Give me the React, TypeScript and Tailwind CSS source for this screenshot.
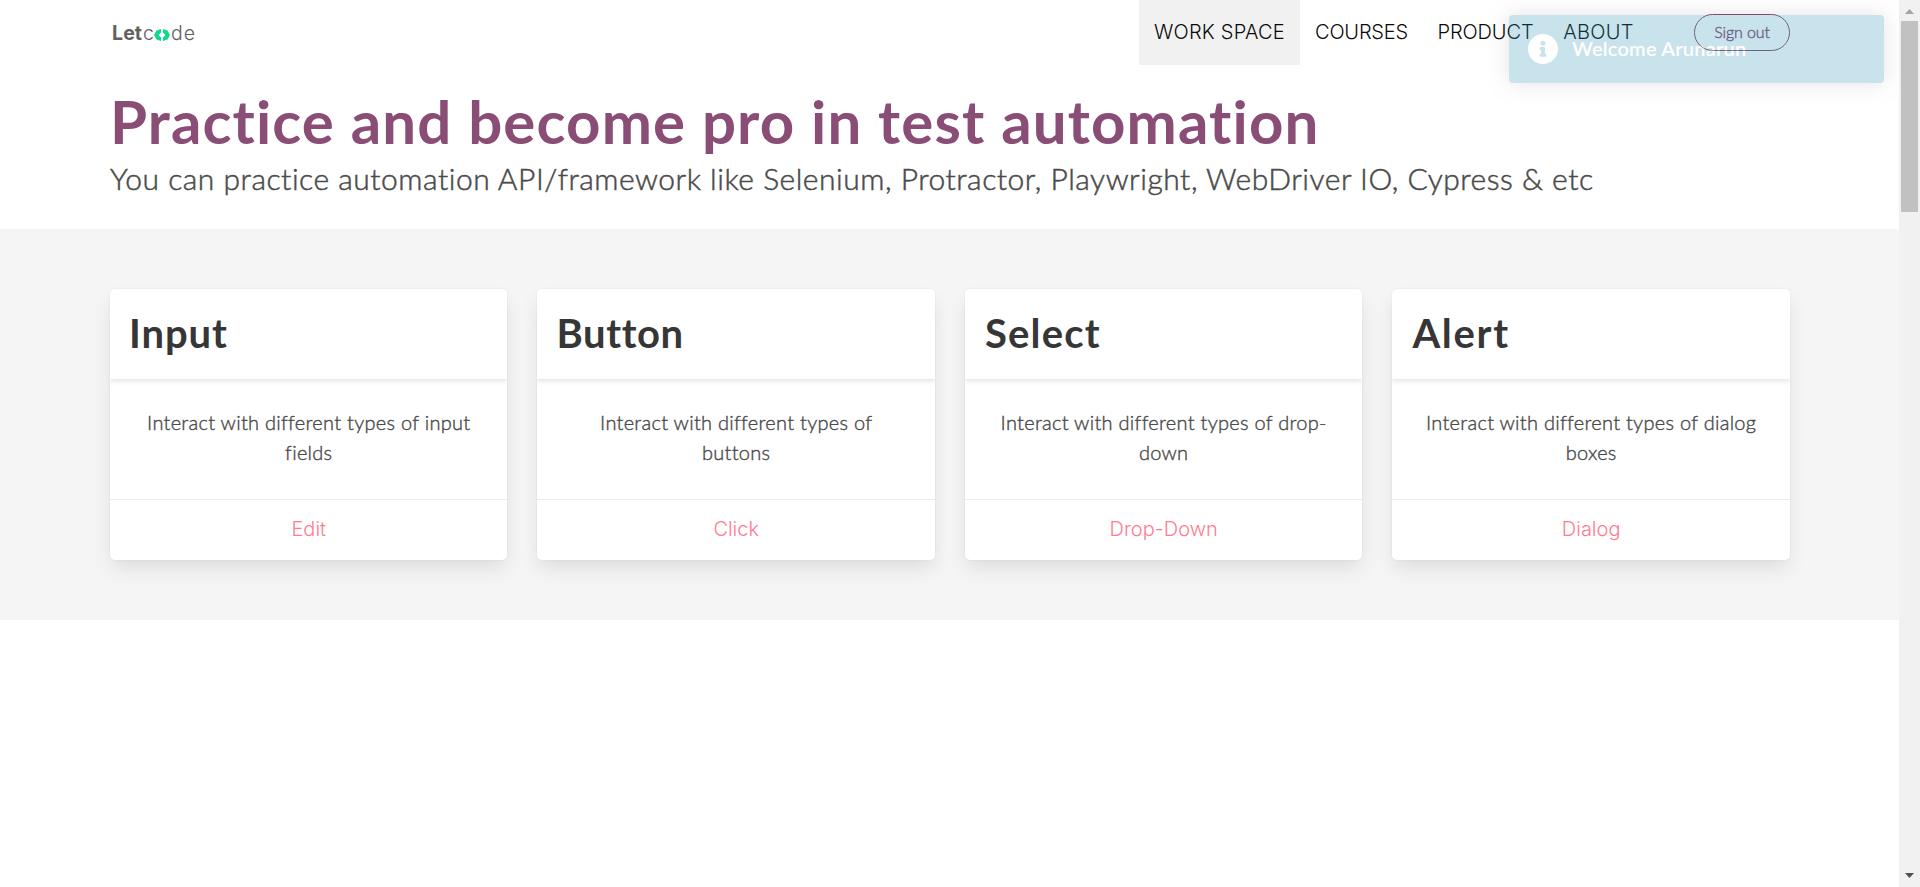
const cards = [
  { title: 'Input', track: 'pl-[19px] tracking-[0.9px]', text: ['Interact with different types of input', 'fields'], link: 'Edit' },
  { title: 'Button', track: 'pl-[19px] tracking-[0.6px]', text: ['Interact with different types of', 'buttons'], link: 'Click' },
  { title: 'Select', track: 'pl-[20px] tracking-[1.2px]', text: ['Interact with different types of drop-', 'down'], link: 'Drop-Down' },
  { title: 'Alert', track: 'pl-[20px] tracking-[1.7px]', text: ['Interact with different types of dialog', 'boxes'], link: 'Dialog' },
];

function Logo() {
  return (
    <div className="flex h-[65px] w-[90px] items-center pt-[2px] font-['Inter',sans-serif] text-[19.5px] leading-none text-[#606060]">
      <span className="w-[32px] pl-[2px] font-bold tracking-[0.1px]">Let</span>
      <span className="w-[12px] pl-px font-light">c</span>
      <svg viewBox="0 0 16 12" className="mt-[2px] h-[12px] w-[16px] shrink-0" fill="#10d98a">
        <path d="M7 0 V3.6 L4.6 6 L7 8.4 V12 L2.5 10.4 L0 6 L2.5 1.6 Z" />
        <path d="M9 0 V3.6 L11.4 6 L9 8.4 V12 L13.5 10.4 L16 6 L13.5 1.6 Z" />
      </svg>
      <span className="pl-[1px] font-light tracking-[1px]">de</span>
    </div>
  );
}

function Navbar() {
  return (
    <header className="flex h-[65px] w-[1680px] justify-between">
      <Logo />
      <nav className="flex font-['Inter',sans-serif] text-[20px] font-light leading-[65px] text-[#0a0a0a]">
        <a className="w-[161px] bg-[#f1f1f1] text-center tracking-[0.2px]">WORK SPACE</a>
        <a className="w-[122px] pl-px text-center tracking-[-0.2px]">COURSES</a>
        <a className="w-[127px] text-center tracking-[-0.1px]">PRODUCT</a>
        <a className="w-[99px] text-center tracking-[0.3px]">ABOUT</a>
        <div className="flex w-[142px] items-center justify-end">
          <button className="h-[37px] w-[96px] rounded-full border border-[#8a4d76] pb-px font-['Lato',sans-serif] text-[16px] font-light leading-[34px] tracking-[-0.1px] text-[#8a4d76] [-webkit-text-stroke:0.4px]">
            Sign out
          </button>
        </div>
      </nav>
    </header>
  );
}

function Toast() {
  return (
    <div className="absolute left-[1509px] top-[15px] flex h-[68px] w-[375px] items-center rounded bg-[#2f96b4] pl-[19px] opacity-[0.26] shadow-[0_0_20px_rgba(0,0,0,0.4)]">
      <svg viewBox="8 8 496 496" className="h-[30px] w-[30px]" fill="#fff">
        <path d="M256 8C119 8 8 119 8 256s111 248 248 248 248-111 248-248S393 8 256 8zm0 110a42 42 0 1 1 0 84 42 42 0 0 1 0-84zm56 254a12 12 0 0 1-12 12h-88a12 12 0 0 1-12-12v-24a12 12 0 0 1 12-12h12v-64h-12a12 12 0 0 1-12-12v-24a12 12 0 0 1 12-12h64a12 12 0 0 1 12 12v100h12a12 12 0 0 1 12 12v24z" />
      </svg>
      <span className="-mt-[3px] pl-[14px] font-['Lato',sans-serif] text-[20px] font-semibold leading-none tracking-[0.22px] text-white">Welcome Arunarun</span>
    </div>
  );
}

function Scrollbar() {
  return (
    <div className="flex h-[887px] w-[21px] shrink-0 flex-col items-center justify-between bg-[#f1f1f1]">
      <div className="flex flex-col items-center">
        <svg viewBox="0 0 21 21" className="h-[21px] w-[21px]"><path d="M6 14 L10.5 9 L15 14 Z" fill="#a3a3a3" /></svg>
        <div className="h-[191px] w-[17px] bg-[#c1c1c1]" />
      </div>
      <svg viewBox="0 0 21 21" className="h-[21px] w-[21px]"><path d="M6 7 L10.5 12 L15 7 Z" fill="#505050" /></svg>
    </div>
  );
}

export default function App() {
  return (
    <div className="relative flex h-[887px] w-[1920px] overflow-hidden bg-white font-['Lato',sans-serif]">
      <div className="flex w-[1899px] flex-col">
        <div className="flex h-[229px] flex-col pl-[110px]">
          <Navbar />
          <h1 className="mt-[22px] h-[68px] whitespace-nowrap text-[60px] font-bold leading-[68px] tracking-[1.13px] text-[#8a4d76]">
            Practice and become pro in test automation
          </h1>
          <p className="mt-[1px] whitespace-nowrap text-[30px] font-light leading-[45px] tracking-[0.52px] text-[#4a4a4a] [-webkit-text-stroke:0.5px]">
            You can practice automation API/framework like Selenium, Protractor, Playwright, WebDriver IO, Cypress &amp; etc
          </p>
        </div>
        <main className="h-[391px] bg-[#f5f5f5] pl-[110px] pt-[60px]">
          <div className="grid w-[1679.9px] grid-cols-4 gap-[30px]">
            {cards.map((c) => (
              <article key={c.title} className="flex h-[271px] flex-col overflow-hidden rounded-[5px] bg-white shadow-[0_10px_20px_-2.5px_rgba(10,10,10,0.1),0_0_0_1px_rgba(10,10,10,0.02)]">
                <header className="h-[90px] shadow-[0_2.5px_5px_rgba(10,10,10,0.1)]">
                  <h2 className={`text-[40px] font-bold leading-[88px] text-[#363636] ${c.track}`}>{c.title}</h2>
                </header>
                <p className="h-[120px] pt-[28px] text-center text-[20px] font-light leading-[30px] tracking-[0.28px] text-[#4a4a4a] [-webkit-text-stroke:0.4px]">
                  {c.text[0]}
                  <br />
                  {c.text[1]}
                </p>
                <footer className="h-[61px] border-t border-[#ededed] text-center font-['Inter',sans-serif] text-[20px] font-light leading-[59px] text-[#ff7b92]">{c.link}</footer>
              </article>
            ))}
          </div>
        </main>
      </div>
      <Scrollbar />
      <Toast />
    </div>
  );
}
